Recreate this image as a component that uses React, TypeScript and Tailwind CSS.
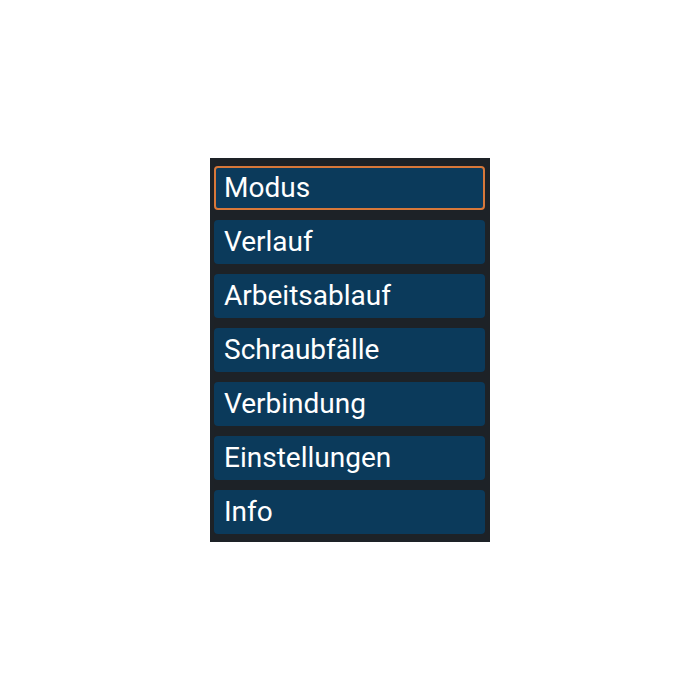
const items = ["Modus", "Verlauf", "Arbeitsablauf", "Schraubfälle", "Verbindung", "Einstellungen", "Info"];

export default function App() {
  return (
    <div className="w-[700px] h-[700px] bg-white flex items-start justify-center pt-[158px]">
      <div className="w-[280px] bg-[#1d2227] pl-[4px] pr-[5px] py-[8px] flex flex-col gap-[10px]">
        {items.map((label, i) => (
          <div
            key={label}
            className={
              i === 0
                ? "h-[44px] rounded-[4px] bg-[#0b3a5b] border-2 border-[#d8783a] flex items-center pl-[8px] text-white text-[28px] leading-none"
                : "h-[44px] rounded-[4px] bg-[#0b3a5b] flex items-center pl-[10px] text-white text-[28px] leading-none"
            }
            style={{ fontFamily: "Roboto, 'Noto Sans', sans-serif" }}
          >
            {label}
          </div>
        ))}
      </div>
    </div>
  );
}
